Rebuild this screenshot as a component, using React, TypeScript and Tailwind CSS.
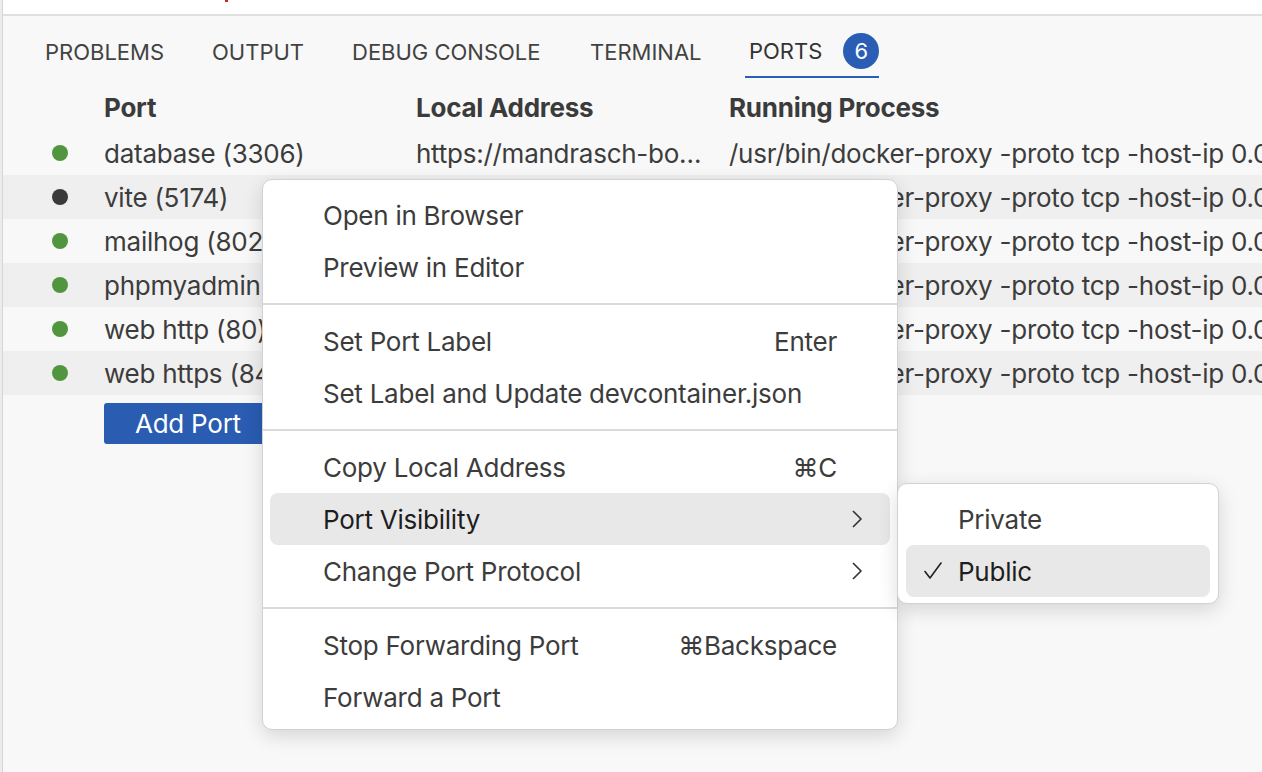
import React from 'react';

// Ports panel data
const PORTS = [
    { name: "database (3306)", active: true },
    { name: "vite (5174)", active: false },
    { name: "mailhog (8025)", active: true },
    { name: "phpmyadmin (8080)", active: true },
    { name: "web http (80)", active: true },
    { name: "web https (8443)", active: true },
];

const TABS = [
    { label: "PROBLEMS", width: "w-[167px]" },
    { label: "OUTPUT", width: "w-[140px]" },
    { label: "DEBUG CONSOLE", width: "w-[238px]" },
    { label: "TERMINAL", width: "w-[159px]" },
];

const PROCESS = "/usr/bin/docker-proxy -proto tcp -host-ip 0.0.0.0 -host-port 3306 -container-ip 172.18.0.3";

type MenuEntry =
    | { kind: "item"; label: string; shortcut?: string; submenu?: boolean; selected?: boolean }
    | { kind: "sep" };

const MENU: MenuEntry[] = [
    { kind: "item", label: "Open in Browser" },
    { kind: "item", label: "Preview in Editor" },
    { kind: "sep" },
    { kind: "item", label: "Set Port Label", shortcut: "Enter" },
    { kind: "item", label: "Set Label and Update devcontainer.json" },
    { kind: "sep" },
    { kind: "item", label: "Copy Local Address", shortcut: "⌘C" },
    { kind: "item", label: "Port Visibility", submenu: true, selected: true },
    { kind: "item", label: "Change Port Protocol", submenu: true },
    { kind: "sep" },
    { kind: "item", label: "Stop Forwarding Port", shortcut: "⌘Backspace" },
    { kind: "item", label: "Forward a Port" },
];

const Chevron = () => (
    <svg width="12" height="20" viewBox="0 0 12 20" fill="none">
        <polyline points="2,2 10,10 2,18" stroke="#333" strokeWidth="1.7" strokeLinejoin="round" />
    </svg>
);

const Check = () => (
    <svg width="20" height="20" viewBox="0 0 20 20" fill="none">
        <polyline points="2,10.5 7,17 18,2" stroke="#222" strokeWidth="1.6" strokeLinejoin="round" strokeLinecap="round" />
    </svg>
);

export default function App() {
    return (
        <div
            className="relative w-[1262px] h-[772px] overflow-hidden bg-white flex text-[#3c3c3c]"
            style={{ fontFamily: 'Inter, "Noto Sans", "DejaVu Sans", sans-serif' }}
        >
            {/* left editor edge */}
            <div className="w-[2px] bg-[#ebebf0]" />
            <div className="w-px bg-[#d6d6d6]" />

            <div className="flex-1 flex flex-col">
                {/* bit of editor above the panel */}
                <div className="h-[14px] bg-white flex">
                    <div className="ml-[222px] w-[3px] h-[2px] bg-[#c42b1c]" />
                </div>

                <div className="flex-1 bg-[#f8f8f8] border-t-2 border-[#e0e0e0] flex flex-col">
                    {/* tab bar */}
                    <div className="flex pt-[10px] pl-[38px] h-[71px]">
                        {TABS.map((t) => (
                            <div key={t.label} className={`${t.width} h-[52px] flex items-center px-[4px] text-[22px] text-[#424242]`}>
                                {t.label}
                            </div>
                        ))}
                        <div className="h-[52px] flex items-center pl-[4px] border-b-2 border-[#2a5fb5] text-[22px] text-[#333]">
                            <span>PORTS</span>
                            <span className="ml-[21px] w-[36px] h-[36px] rounded-full bg-[#2a5db4] text-white flex items-center justify-center text-[22px]">
                                6
                            </span>
                        </div>
                    </div>

                    {/* table */}
                    <div className="flex flex-col text-[26px] tracking-[-0.25px]">
                        <div className="grid grid-cols-[101px_312px_313px_1fr] h-[44px] pb-[4px] items-center font-bold text-[#3b3b3b]">
                            <div />
                            <div>Port</div>
                            <div>Local Address</div>
                            <div className="whitespace-nowrap">Running Process</div>
                        </div>
                        {PORTS.map((p, i) => (
                            <div
                                key={p.name}
                                className={`grid grid-cols-[101px_312px_313px_1fr] h-[44px] items-center ${i % 2 === 1 ? 'bg-[#efefef]' : ''}`}
                            >
                                <div className="flex justify-end pr-[36px]">
                                    <span className={`w-[16px] h-[16px] rounded-full ${p.active ? 'bg-[#51963f]' : 'bg-[#3a3a3a]'}`} />
                                </div>
                                <div className="whitespace-nowrap overflow-hidden">{p.name}</div>
                                <div className="whitespace-nowrap overflow-hidden text-ellipsis pr-[16px]">https://mandrasch-bookish-space-waffle.github.dev</div>
                                <div className="whitespace-nowrap overflow-hidden">{PROCESS}</div>
                            </div>
                        ))}
                        <div className="pl-[101px] pt-[8px]">
                            <button className="h-[41px] px-[31px] rounded-[3px] bg-[#2a5cb2] text-white text-[26px] leading-none">
                                Add Port
                            </button>
                        </div>
                    </div>
                </div>
            </div>

            {/* context menu */}
            <div className="absolute left-[262px] top-[179px] w-[636px] bg-white border border-[#d2d2d2] rounded-[10px] shadow-[0_6px_20px_rgba(0,0,0,0.14)] px-[7px] pt-[9px] pb-[6px] text-[26px] tracking-[-0.25px]">
                {MENU.map((m, i) =>
                    m.kind === "sep" ? (
                        <div key={i} className="-mx-[7px] my-[10px] h-[2px] bg-[#dadada]" />
                    ) : (
                        <div
                            key={i}
                            className={`h-[52px] flex items-center pl-[53px] pr-[53px] rounded-[8px] ${m.selected ? 'bg-[#e8e8e8] text-[#1e1e1e]' : 'text-[#3c3c3c]'}`}
                        >
                            <span className="flex-1 whitespace-nowrap">{m.label}</span>
                            {m.shortcut && <span className="whitespace-nowrap">{m.shortcut}</span>}
                            {m.submenu && (
                                <span className="-mr-[26px] flex items-center">
                                    <Chevron />
                                </span>
                            )}
                        </div>
                    )
                )}
            </div>

            {/* submenu */}
            <div className="absolute left-[897px] top-[483px] w-[322px] bg-white border border-[#d2d2d2] rounded-[10px] shadow-[0_6px_20px_rgba(0,0,0,0.14)] px-[8px] pt-[9px] pb-[6px] text-[26px] tracking-[-0.25px]">
                <div className="h-[52px] flex items-center pl-[52px] text-[#3c3c3c]">Private</div>
                <div className="h-[52px] flex items-center rounded-[8px] bg-[#e8e8e8] text-[#1e1e1e]">
                    <span className="w-[52px] flex justify-center pl-[2px]">
                        <Check />
                    </span>
                    <span>Public</span>
                </div>
            </div>
        </div>
    );
}
